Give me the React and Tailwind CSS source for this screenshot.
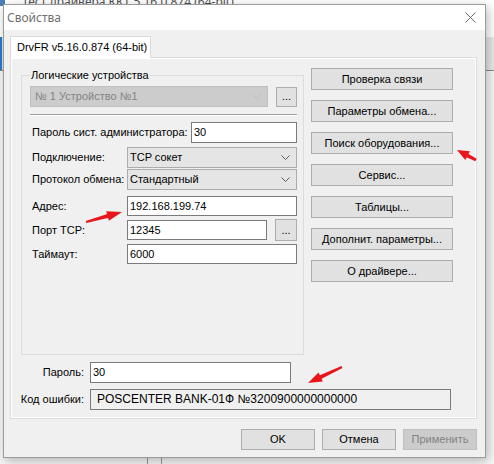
import React from "react";

function Chevron({ color = "#606060" }) {
  return (
    <svg width="9" height="5" viewBox="0 0 9 5" className="shrink-0">
      <path d="M0.5 0.5 L4.5 4.5 L8.5 0.5" fill="none" stroke={color} strokeWidth="1" />
    </svg>
  );
}

function Btn({ children, className = "", disabled = false }) {
  return (
    <div
      className={`flex items-center justify-center border ${
        disabled ? "border-[#bfbfbf] bg-[#cccccc] text-[#838383]" : "border-[#adadad] bg-[#e1e1e1] text-black"
      } ${className}`}
    >
      {children}
    </div>
  );
}

function Combo({ value, disabled = false, className = "" }) {
  return (
    <div
      className={`flex items-center justify-between border pr-[6px] ${
        disabled
          ? "border-[#bfbfbf] bg-[#cccccc] pl-[4px] text-[#838383]"
          : "border-[#acacac] bg-[#e5e5e5] pl-[2px] text-black"
      } ${className}`}
    >
      <span>{value}</span>
      <Chevron color={disabled ? "#bdbdbd" : "#5a5a5a"} />
    </div>
  );
}

function Field({ value, className = "" }) {
  return (
    <div className={`flex items-center border border-[#7a7a7a] bg-white pl-[2px] ${className}`}>{value}</div>
  );
}

function Arrow({ x1, y1, x2, y2, hl = 14, hw = 11, tw = 2, sw = 4 }) {
  const dx = x2 - x1;
  const dy = y2 - y1;
  const len = Math.hypot(dx, dy);
  const ux = dx / len;
  const uy = dy / len;
  const px = -uy;
  const py = ux;
  const bx = x2 - ux * hl;
  const by = y2 - uy * hl;
  const shaft = [
    [x1 + (px * tw) / 2, y1 + (py * tw) / 2],
    [bx + ux * 2 + (px * sw) / 2, by + uy * 2 + (py * sw) / 2],
    [bx + ux * 2 - (px * sw) / 2, by + uy * 2 - (py * sw) / 2],
    [x1 - (px * tw) / 2, y1 - (py * tw) / 2],
  ];
  const head = [
    [x2, y2],
    [bx + (px * hw) / 2, by + (py * hw) / 2],
    [bx - (px * hw) / 2, by - (py * hw) / 2],
  ];
  const pts = (a) => a.map((p) => p.join(",")).join(" ");
  return (
    <g fill="#e8161c">
      <polygon points={pts(shaft)} />
      <polygon points={pts(head)} />
    </g>
  );
}

export default function App() {
  return (
    <div className="relative h-[464px] w-[494px] overflow-hidden bg-white font-['Liberation_Sans',Arial,sans-serif] text-[11px] leading-[13px] text-black">
      {/* main program window behind the dialog */}
      <div className="flex h-full flex-col">
        <div className="flex h-[37px] items-start">
          <div className="h-[6px] w-[5px] bg-[#4a7fb8]" />
          <span className="-mt-[5px] ml-[17px] font-['Noto_Sans',sans-serif] text-[12px] leading-[14px] text-[#505050]">
            Тест драйвера ККТ 5.16.0.874 (64-bit)
          </span>
        </div>
        <div className="flex h-[34px] border-b border-[#8c8c8c] bg-[#e9e9e9]">
          <div className="w-[2px] bg-[#2b79d0]" />
        </div>
        <div className="flex flex-1 bg-[#f7f7f7]">
          <div className="ml-[147px] w-[15px] border-x border-[#9a9a9a]" />
        </div>
      </div>

      {/* Свойства dialog */}
      <div className="absolute left-[3px] top-[4px] flex w-[483px] flex-col border border-[#9b9b9b] bg-[#f0f0f0] shadow-[2px_3px_10px_rgba(0,0,0,0.28)]">
        <div className="flex h-[25px] items-center justify-between bg-white pl-[3px] pr-[9px]">
          <span className="font-['Noto_Sans',sans-serif] text-[12px] text-[#707070]">Свойства</span>
          <svg width="11" height="11" viewBox="0 0 11 11">
            <path d="M0.5 0.5 L10.5 10.5 M10.5 0.5 L0.5 10.5" stroke="#6a6a6a" strokeWidth="1" />
          </svg>
        </div>

        <div className="flex flex-col pl-[6px] pr-[8px] pt-[6px] pb-[7px]">
          {/* tab header */}
          <div className="flex">
            <div className="relative z-10 -mb-px flex h-[22px] w-[141px] items-center border-x border-t border-[#d9d9d9] bg-white pl-[6px]">
              DrvFR v5.16.0.874 (64-bit)
            </div>
          </div>

          {/* tab page */}
          <div className="flex w-[467px] flex-col border border-[#dcdcdc] pl-[10px] pt-[10px] pb-[8px] shadow-[inset_1px_1px_0_#ffffff,inset_-1px_-1px_0_#ffffff]">
            <div className="flex">
              <fieldset className="h-[287px] w-[283px] border border-[#dcdcdc]">
                <legend className="ml-[8px] px-[1px] leading-[14px]">Логические устройства</legend>
                <div className="flex flex-col pl-[8px] pr-[6px] pt-[4px]">
                  <div className="flex items-center">
                    <Combo value="№ 1 Устройство №1" disabled className="h-[21px] w-[238px]" />
                    <Btn className="ml-auto h-[20px] w-[21px]">...</Btn>
                  </div>
                  <div className="mt-[7px] h-[2px] border-t border-b border-t-[#a0a0a0] border-b-white" />
                  <div className="mt-[6px] flex items-center">
                    <span className="pl-[2px]">Пароль сист. администратора:</span>
                    <Field value="30" className="ml-auto h-[21px] w-[106px]" />
                  </div>
                  <div className="mt-[4px] flex items-center">
                    <span className="w-[97px] pl-[2px]">Подключение:</span>
                    <Combo value="TCP сокет" className="h-[21px] flex-1" />
                  </div>
                  <div className="mt-[1px] flex items-center">
                    <span className="w-[97px] pl-[2px]">Протокол обмена:</span>
                    <Combo value="Стандартный" className="h-[21px] flex-1" />
                  </div>
                  <div className="mt-[6px] flex items-center">
                    <span className="w-[97px] pl-[2px]">Адрес:</span>
                    <Field value="192.168.199.74" className="h-[20px] flex-1" />
                  </div>
                  <div className="mt-[3px] flex items-center">
                    <span className="w-[97px] pl-[2px]">Порт TCP:</span>
                    <Field value="12345" className="h-[20px] w-[140px]" />
                    <Btn className="ml-auto h-[22px] w-[22px]">...</Btn>
                  </div>
                  <div className="mt-[3px] flex items-center">
                    <span className="w-[97px] pl-[2px]">Таймаут:</span>
                    <Field value="6000" className="h-[20px] flex-1" />
                  </div>
                </div>
              </fieldset>

              <div className="ml-[7px] flex flex-col gap-[10px]">
                <Btn className="h-[22px] w-[142px]">Проверка связи</Btn>
                <Btn className="h-[22px] w-[142px]">Параметры обмена...</Btn>
                <Btn className="h-[22px] w-[142px]">Поиск оборудования...</Btn>
                <Btn className="h-[22px] w-[142px]">Сервис...</Btn>
                <Btn className="h-[22px] w-[142px]">Таблицы...</Btn>
                <Btn className="h-[22px] w-[142px]">Дополнит. параметры...</Btn>
                <Btn className="h-[22px] w-[142px]">О драйвере...</Btn>
              </div>
            </div>

            <div className="-ml-[10px] mt-[7px] flex items-center">
              <span className="w-[73px] text-right">Пароль:</span>
              <Field value="30" className="ml-[6px] h-[21px] w-[201px]" />
            </div>
            <div className="-ml-[10px] mt-[6px] flex items-center">
              <span className="w-[73px] text-right">Код ошибки:</span>
              <div className="ml-[6px] flex h-[21px] w-[361px] items-center border border-[#7a7a7a] bg-[#f0f0f0] pl-[6px] text-[12px]">
                POSCENTER BANK-01Ф №3200900000000000
              </div>
            </div>
          </div>

          {/* dialog buttons */}
          <div className="mt-[10px] flex justify-end gap-[7px]">
            <Btn className="h-[21px] w-[74px]">OK</Btn>
            <Btn className="h-[21px] w-[74px]">Отмена</Btn>
            <Btn disabled className="h-[21px] w-[74px]">Применить</Btn>
          </div>
        </div>
      </div>

      {/* annotation arrows */}
      <svg className="pointer-events-none absolute inset-0 z-20" width="494" height="464" viewBox="0 0 494 464">
        <Arrow x1={86} y1={222} x2={122} y2={212} hl={15} hw={10} tw={2} sw={4} />
        <Arrow x1={476} y1={160} x2={457} y2={150} hl={12} hw={10} tw={3} sw={4} />
        <Arrow x1={342} y1={367} x2={308} y2={383} hl={14} hw={10} tw={2} sw={4} />
      </svg>
    </div>
  );
}
